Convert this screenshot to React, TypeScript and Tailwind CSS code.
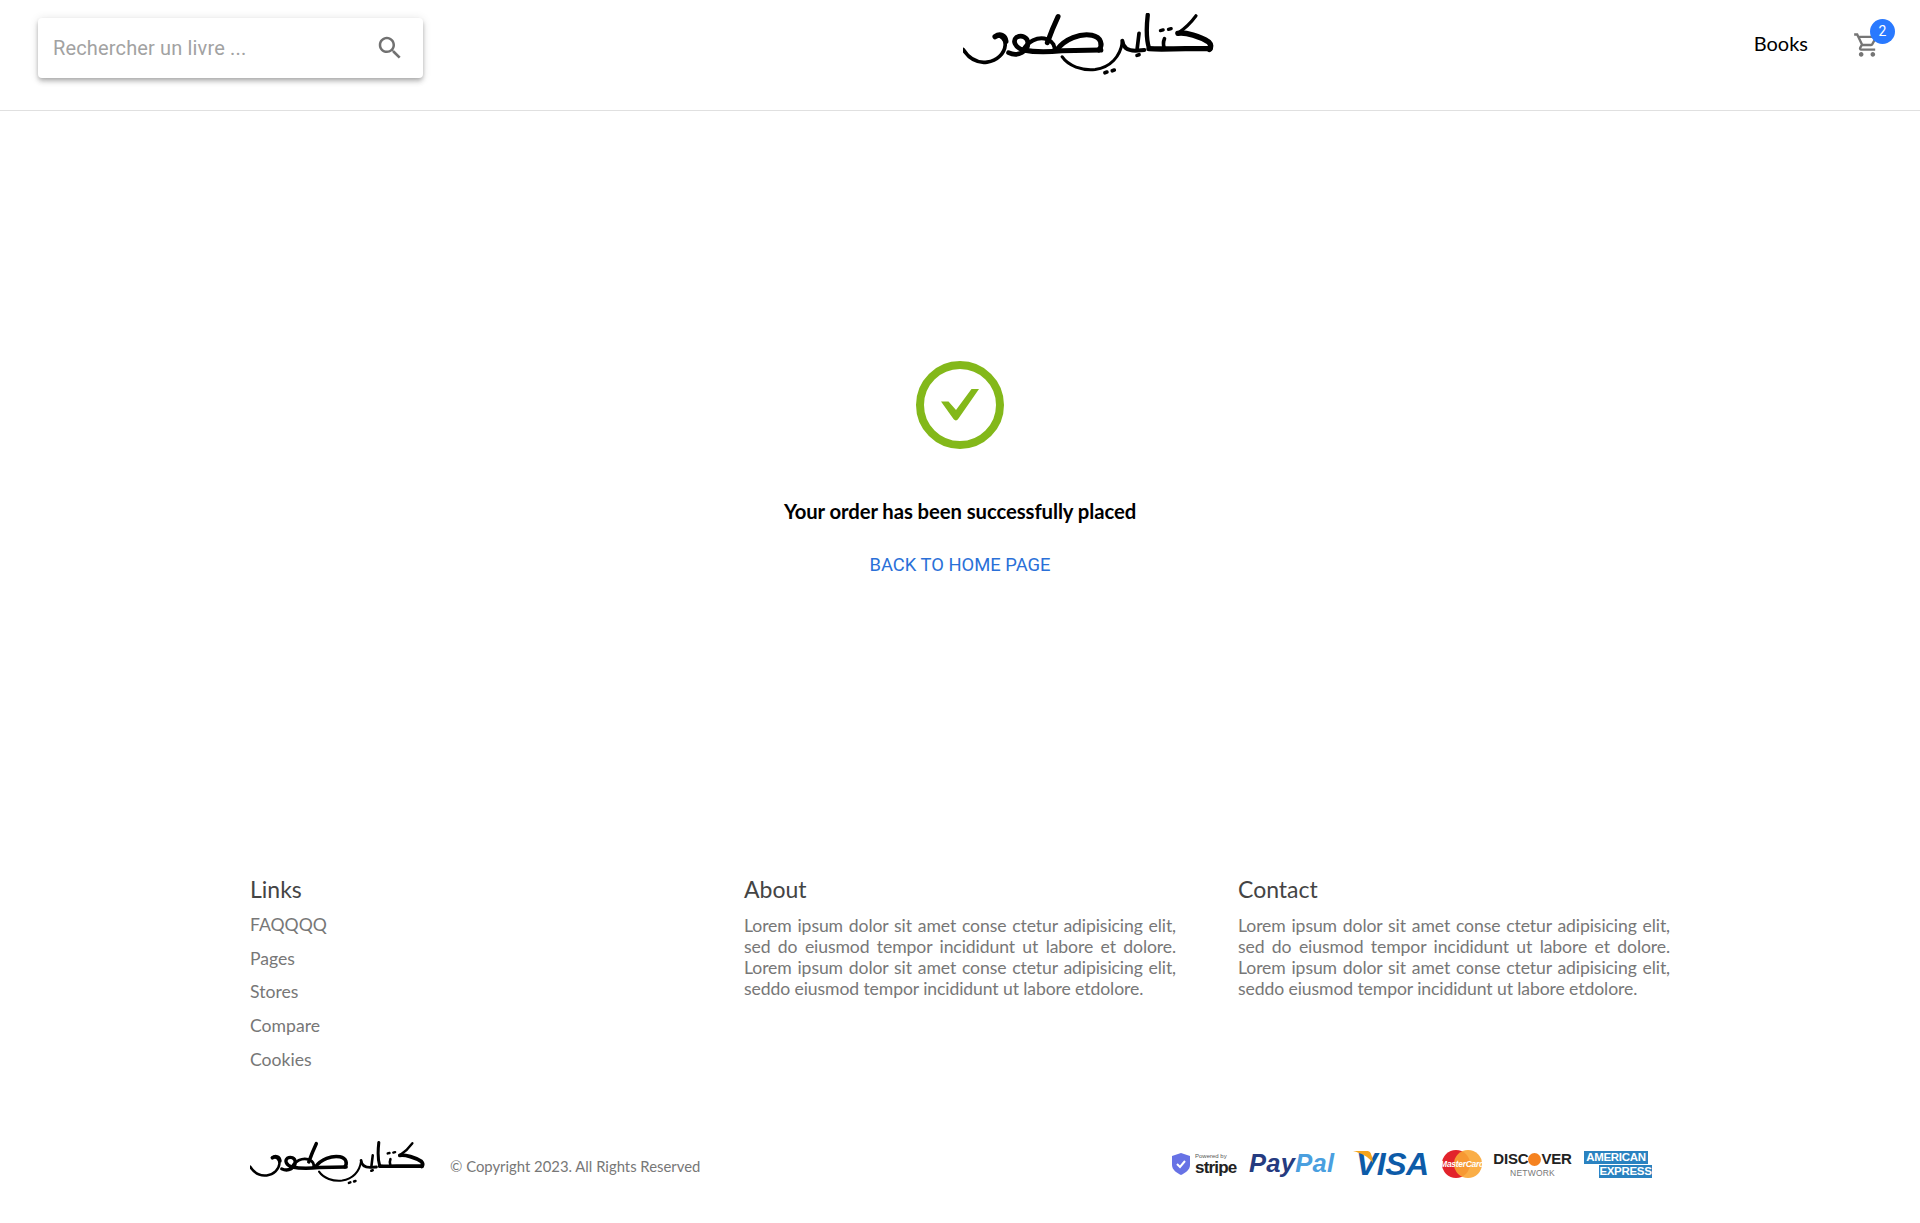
const links = ['FAQQQQ', 'Pages', 'Stores', 'Compare', 'Cookies'];
const lorem = 'Lorem ipsum dolor sit amet conse ctetur adipisicing elit, sed do eiusmod tempor incididunt ut labore et dolore. Lorem ipsum dolor sit amet conse ctetur adipisicing elit, seddo eiusmod tempor incididunt ut labore etdolore.';

function Logo({ className }: { className: string }) {
  return (
    <svg viewBox="70 40 750 190" className={className} fill="none" stroke="#000" strokeLinecap="round" strokeLinejoin="round" aria-label="logo">
      {/* left tail and first hump */}
      <path d="M70 148C88 176 112 190 142 186C172 182 194 160 196 136C197 122 188 110 172 106" strokeWidth="11" />
      <path d="M166 110C180 100 196 106 198 124" strokeWidth="16" />
      {/* waw loop */}
      <path d="M206 158C236 172 264 152 264 130C264 110 244 104 230 112C218 122 224 142 250 150" strokeWidth="14" />
      {/* stem and bowl of the middle letter */}
      <path d="M354 50C342 75 332 100 322 128" strokeWidth="15" />
      <path d="M250 150C262 126 292 108 322 118C340 126 346 140 342 152" strokeWidth="12" />
      <path d="M250 150C290 158 330 156 365 152L482 150" strokeWidth="15" />
      <path d="M350 150C375 116 420 100 455 106C484 112 488 135 476 150" strokeWidth="15" />
      <path d="M366 170C385 198 425 212 465 208C510 202 540 170 546 126" strokeWidth="9" />
      <path d="M546 122C548 142 560 152 585 152L612 150" strokeWidth="12" />
      <path d="M596 100L590 150" strokeWidth="11" />
      {/* dots */}
      <path d="M494 218L500 216M516 212L522 210" strokeWidth="11" />
      <path d="M590 166L596 164" strokeWidth="11" />
      {/* right part */}
      <path d="M622 45C618 80 618 120 626 146" strokeWidth="13" />
      <path d="M626 146C660 148 700 146 735 146L808 146" strokeWidth="16" />
      <path d="M672 116C668 125 668 135 672 146" strokeWidth="11" />
      <path d="M712 100C735 96 780 110 804 126C812 134 812 142 806 148" strokeWidth="16" />
      <path d="M712 100C730 88 750 70 766 48" strokeWidth="10" />
      <path d="M660 92L668 90M684 88L692 86" strokeWidth="10" />
    </svg>
  );
}

function PaymentLogos() {
  return (
    <div className="flex items-center mt-[2px] font-['Liberation_Sans',sans-serif]">
      {/* stripe */}
      <svg viewBox="0 0 18 22" className="w-[18px] h-[22px] mr-[5px]">
        <path d="M9 0L18 3V12C18 17 13 20 9 22C5 20 0 17 0 12V3Z" fill="#6772e5" />
        <path d="M5 11L8 14L13 8" fill="none" stroke="#fff" strokeWidth="2" />
      </svg>
      <div className="flex flex-col w-[40px] mr-[14px]">
        <span className="text-[6px] leading-[7px] text-[#555]">Powered by</span>
        <span className="text-[17px] leading-[16px] font-bold text-[#222] tracking-[-0.8px]">stripe</span>
      </div>
      {/* paypal */}
      <span className="w-[89px] mr-[15px] text-[25.5px] leading-none font-bold italic tracking-[0.3px] whitespace-nowrap">
        <span className="text-[#253b80]">Pay</span>
        <span className="text-[#4a9fdf]">Pal</span>
      </span>
      {/* visa */}
      <span className="relative w-[75px] mr-[14px] text-[32px] leading-none font-bold italic text-[#0d5ba8] tracking-[-0.5px] pl-[3px]">
        VISA
        <svg viewBox="0 0 20 14" className="absolute left-0 top-[3px] w-[20px] h-[14px]">
          <path d="M0 0H14C17 0 18 2 19 6L20 12C16 6 8 2 0 0Z" fill="#f4a51c" />
        </svg>
      </span>
      {/* mastercard */}
      <div className="relative w-[40px] h-[28px] mr-[13px]">
        <div className="absolute left-0 top-0 w-[28px] h-[28px] rounded-full bg-[#e2232b]" />
        <div className="absolute right-0 top-0 w-[28px] h-[28px] rounded-full bg-[#f9a533] opacity-90" />
        <span className="absolute inset-0 flex items-center justify-center text-[8.5px] font-bold italic text-white tracking-[-0.3px]">MasterCard</span>
      </div>
      {/* discover */}
      <div className="flex flex-col items-center w-[75px] mr-[14px]">
        <div className="flex items-center text-[15px] leading-[18px] font-bold text-[#222] tracking-[-0.2px]">
          DISC<span className="w-[13px] h-[13px] rounded-full bg-[#f58220]" />VER
        </div>
        <span className="text-[8.5px] leading-[10px] text-[#777] tracking-[0.2px]">NETWORK</span>
      </div>
      {/* amex */}
      <div className="flex flex-col w-[68px] font-bold text-white">
        <span className="w-[64px] h-[13px] bg-[#2a82c0] text-[11.5px] leading-[13px] text-center tracking-[-0.3px]">AMERICAN</span>
        <span className="self-end w-[53px] h-[13px] mt-px bg-[#2a82c0] text-[11.5px] leading-[13px] text-center tracking-[-0.3px]">EXPRESS</span>
      </div>
    </div>
  );
}

export default function App() {
  return (
    <div className="min-h-[1223px] bg-white flex flex-col font-['Lato',sans-serif]">
      <header className="relative h-[111px] border-b border-[#e0e0e0] flex items-start justify-between pl-[38px] pr-[39px] shrink-0">
        <div className="mt-[18px] w-[385px] h-[60px] rounded-[4px] bg-white shadow-[0_2px_4px_-1px_rgba(0,0,0,0.2),0_4px_5px_0_rgba(0,0,0,0.14),0_1px_10px_0_rgba(0,0,0,0.12)] flex items-center justify-between pl-[15px] pr-[18px]">
          <span className="font-['Roboto',sans-serif] text-[20px] tracking-[0.15px] text-[#a2a2a2]">Rechercher un livre ...</span>
          <svg viewBox="0 0 24 24" className="w-[30px] h-[30px] fill-[#717171]">
            <path d="M15.5 14h-.79l-.28-.27C15.41 12.59 16 11.11 16 9.5 16 5.91 13.09 3 9.5 3S3 5.91 3 9.5 5.91 16 9.5 16c1.61 0 3.09-.59 4.23-1.57l.27.28v.79l5 4.99L20.49 19l-4.99-5zm-6 0C7.01 14 5 11.99 5 9.5S7.01 5 9.5 5 14 7.01 14 9.5 11.99 14 9.5 14z" />
          </svg>
        </div>
        <Logo className="absolute left-[963px] top-[13px] w-[251px] h-[64px]" />
        <div className="flex items-center mt-[23px]">
          <span className="text-[20px] leading-[40px] text-black mr-[45px]">Books</span>
          <div className="relative mt-[4px]">
            <svg viewBox="0 0 24 24" className="w-[28px] h-[28px] fill-[#757575]">
              <path d="M15.55 13c.75 0 1.41-.41 1.75-1.03l3.58-6.49c.37-.66-.11-1.48-.87-1.48H5.21l-.94-2H1v2h2l3.6 7.59-1.35 2.44C4.52 15.37 5.48 17 7 17h12v-2H7l1.1-2h7.45zM6.16 6h12.15l-2.76 5H8.53L6.16 6zM7 18c-1.1 0-1.99.9-1.99 2S5.9 22 7 22s2-.9 2-2-.9-2-2-2zm10 0c-1.1 0-1.99.9-1.99 2s.89 2 1.99 2 2-.9 2-2-.9-2-2-2z" />
            </svg>
            <span className="absolute left-[17px] top-[-12px] w-[25px] h-[25px] rounded-full bg-[#2979ff] text-white text-[14px] font-['Roboto',sans-serif] flex items-center justify-center">2</span>
          </div>
        </div>
      </header>

      <main className="flex flex-col items-center pt-[250px] shrink-0">
        <div className="w-[88px] h-[88px] rounded-full border-[8px] border-[#83b81a] flex items-center justify-center">
          <svg viewBox="0 0 38 32" className="w-[38px] h-[32px] shrink-0">
            <path d="M0 12.5H7.5L15 21L30.5 0H38L17.5 29.5C16 32 14 32 12.5 30Z" fill="#83b81a" />
          </svg>
        </div>
        <h1 className="mt-[47px] text-[20.3px] leading-[30px] font-bold text-black tracking-[-0.08px]">Your order has been successfully placed</h1>
        <a className="mt-[24px] font-['Roboto',sans-serif] text-[18.4px] leading-[30px] text-[#2a70d8]">BACK TO HOME PAGE</a>
      </main>

      <footer className="w-[1420px] mx-auto mt-[294px]">
        <div className="grid grid-cols-[432px_432px_432px] gap-x-[62px]">
          <div>
            <h3 className="text-[23px] leading-[30px] text-[#444]">Links</h3>
            <ul className="mt-[6px] flex flex-col gap-[4px] text-[17.6px] leading-[29.7px] text-[#777]">
              {links.map((l) => (
                <li key={l}>{l}</li>
              ))}
            </ul>
          </div>
          <div>
            <h3 className="text-[23px] leading-[30px] text-[#444]">About</h3>
            <p className="mt-[11px] text-[17.6px] leading-[21px] tracking-[-0.1px] text-[#777] text-justify">{lorem}</p>
          </div>
          <div>
            <h3 className="text-[23px] leading-[30px] text-[#444]">Contact</h3>
            <p className="mt-[11px] text-[17.6px] leading-[21px] tracking-[-0.1px] text-[#777] text-justify">{lorem}</p>
          </div>
        </div>
        <div className="mt-[66px] flex items-center justify-between pr-[18px]">
          <div className="flex items-center">
            <Logo className="w-[175px] h-[45px]" />
            <span className="ml-[25px] mt-[7px] text-[14.85px] text-[#777]">© Copyright 2023. All Rights Reserved</span>
          </div>
          <PaymentLogos />
        </div>
      </footer>
    </div>
  );
}
